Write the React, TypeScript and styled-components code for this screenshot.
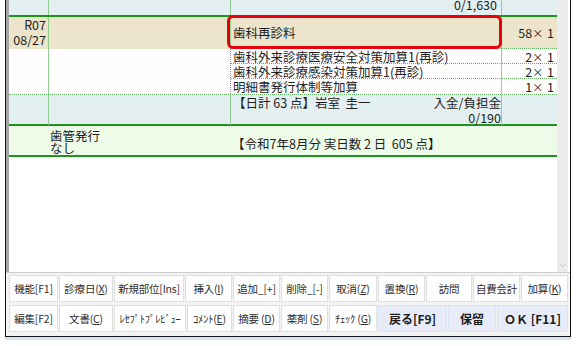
import React from 'react';
import styled, { createGlobalStyle, css } from 'styled-components';

const Global = createGlobalStyle`
  *, *::before, *::after { box-sizing: border-box; }
  html, body { margin: 0; padding: 0; background: #ffffff; }
  body {
    font-family: "Noto Sans CJK JP", "Noto Sans", sans-serif;
    color: #1e1e1e;
  }
  #root { width: 581px; height: 346px; overflow: hidden; }
`;

const COLS = '40px 182px 271px 55px';
const GREEN = '#1d961d';
const VLINE = '#8fcf8f';
const DOT = '#5fb65f';

const Frame = styled.div`
  margin-left: 5px;
  width: 566px;
  height: 337px;
  border: 1px solid #151515;
  border-top: none;
  box-shadow: 0 3px 0 #d7e4f1;
  background: #ffffff;
  display: flex;
  flex-direction: column;
`;

const Upper = styled.div`
  height: 272px;
  display: grid;
  grid-template-columns: 3px 548px 11px 2px;
`;

const LeftBar = styled.div`
  background: #a6a6a6;
`;

const Scroll = styled.div`
  background: #ececec;
  display: flex;
  flex-direction: column;
  justify-content: flex-end;
  align-items: center;
  padding-bottom: 4px;
`;

const Table = styled.div`
  display: flex;
  flex-direction: column;
  overflow: hidden;
  font-size: 12.5px;
  line-height: 15px;
  white-space: nowrap;
`;

const Row = styled.div<{ $bg: string; $h: number; $bottom?: string }>`
  display: grid;
  grid-template-columns: ${COLS};
  height: ${(p) => p.$h}px;
  background: ${(p) => p.$bg};
  border-bottom: ${(p) => p.$bottom ?? 'none'};
`;

const DetailBlock = styled.div`
  display: grid;
  grid-template-columns: ${COLS};
  grid-template-rows: 15px 15px 15px;
  height: 46px;
  background: #fffdfd;
  border-bottom: 1px dotted ${DOT};
`;

const Cell = styled.div<{
  $right?: 'solid' | 'dotted';
  $dotBottom?: boolean;
  $align?: 'left' | 'right';
  $center?: boolean;
  $span?: boolean;
}>`
  ${(p) => p.$right && css`border-right: 1px ${p.$right} ${p.$right === 'solid' ? VLINE : DOT};`}
  ${(p) => p.$dotBottom && css`border-bottom: 1px dotted ${DOT};`}
  ${(p) => p.$span && css`grid-row: 1 / 4;`}
  text-align: ${(p) => p.$align ?? 'left'};
  white-space: pre;
  padding: 0 ${(p) => (p.$align === 'right' ? '3px' : '0')} 0
    ${(p) => (p.$align === 'right' ? '0' : '2px')};
  position: relative;
  ${(p) =>
    p.$center &&
    css`
      display: flex;
      align-items: center;
      justify-content: ${p.$align === 'right' ? 'flex-end' : 'flex-start'};
    `}
`;

const DateCell = styled(Cell)`
  padding-right: 2px;
`;

const CutText = styled.div`
  margin-top: -3px;
  padding-right: 1px;
`;

const Times = styled.span`
  font-size: 11px;
  margin: 0 1px 0 0;
`;

const QtyText = styled.span`
  white-space: pre;
`;

const Highlight = styled.div`
  position: absolute;
  left: -4px;
  top: -2px;
  right: -1px;
  bottom: -1px;
  border: 3px solid #e8000c;
  border-radius: 6px;
  pointer-events: none;
`;

const SplitLine = styled.div`
  display: flex;
  justify-content: space-between;
  white-space: pre;
`;

const RightLine = styled.div`
  text-align: right;
`;

const NoteCell = styled.div<{ $padTop: number; $lh: number }>`
  padding: ${(p) => p.$padTop}px 0 0 1px;
  line-height: ${(p) => p.$lh}px;
  white-space: pre;
`;

const Panel = styled.div`
  flex: 1;
  border-top: 1px solid #cdcdcd;
  background: #f3f3f3;
  padding: 2px 2px 4px 3px;
  display: flex;
  flex-direction: column;
  gap: 3px;
`;

const BtnRow = styled.div`
  display: flex;
  gap: 1px;
`;

const Btn = styled.div<{ $w: number; $primary?: boolean }>`
  width: ${(p) => p.$w}px;
  height: 27px;
  border: 1px solid #dfdfdf;
  background: #ffffff;
  display: flex;
  align-items: center;
  justify-content: center;
  font-size: 10.5px;
  color: #2e2e2e;
  white-space: pre;
  letter-spacing: -0.2px;
  ${(p) =>
    p.$primary &&
    css`
      background: #e7ecf8;
      border-color: #dde3ef;
      font-size: 12px;
      font-weight: bold;
      color: #1c1c1c;
      letter-spacing: 0;
    `}
  u { text-underline-offset: 1px; }
`;

type B = { w: number; label: React.ReactNode; primary?: boolean };

const row1: B[] = [
  { w: 49, label: '機能[F1]' },
  { w: 54, label: <>診療日(<u>X</u>)</> },
  { w: 70, label: '新規部位[Ins]' },
  { w: 47, label: <>挿入(<u>I</u>)</> },
  { w: 47, label: '追加_[+]' },
  { w: 47, label: '削除_[-]' },
  { w: 48, label: <>取消(<u>Z</u>)</> },
  { w: 47, label: <>置換(<u>R</u>)</> },
  { w: 46, label: '訪問' },
  { w: 47, label: '自費会計' },
  { w: 47, label: <>加算(<u>K</u>)</> },
];

const row2: B[] = [
  { w: 49, label: '編集[F2]' },
  { w: 54, label: <>文書(<u>C</u>)</> },
  { w: 72, label: 'ﾚｾﾌﾟﾄﾌﾟﾚﾋﾞｭｰ' },
  { w: 45, label: <>ｺﾒﾝﾄ(<u>E</u>)</> },
  { w: 47, label: <>摘要 (<u>D</u>)</> },
  { w: 47, label: <>薬剤 (<u>S</u>)</> },
  { w: 48, label: <>ﾁｪｯｸ (<u>G</u>)</> },
  { w: 69, label: '戻る[F9]', primary: true },
  { w: 48, label: '保留', primary: true },
  { w: 71, label: 'ＯＫ [F11]', primary: true },
];

const details = [
  { name: '歯科外来診療医療安全対策加算1(再診)', n: '2' },
  { name: '歯科外来診療感染対策加算1(再診)', n: '2' },
  { name: '明細書発行体制等加算', n: '1' },
];

const Qty = ({ n }: { n: string }) => (
  <QtyText>
    {n}
    <Times>×</Times>
    {' 1'}
  </QtyText>
);

const Chevron = () => (
  <svg width="7" height="5" viewBox="0 0 7 5">
    <path d="M0.5 0.8 L3.5 3.8 L6.5 0.8" fill="none" stroke="#b9b9b9" strokeWidth="1" />
  </svg>
);

export default function App() {
  return (
    <>
      <Global />
      <Frame>
        <Upper>
          <LeftBar />
          <Table>
            <Row $bg="#e3eff0" $h={17} $bottom={`2px solid ${GREEN}`}>
              <Cell $right="solid" />
              <Cell $right="solid" />
              <Cell $right="solid" $align="right">
                <CutText>0/1,630</CutText>
              </Cell>
              <Cell />
            </Row>
            <Row $bg="#ece5cc" $h={32}>
              <DateCell $right="solid" $align="right">
                {'R07\n08/27'}
              </DateCell>
              <Cell $right="solid" />
              <Cell $right="solid" $dotBottom $center>
                歯科再診料
                <Highlight />
              </Cell>
              <Cell $dotBottom $center $align="right">
                <Qty n="58" />
              </Cell>
            </Row>
            <DetailBlock>
              <Cell $right="solid" $span />
              <Cell $right="dotted" $span />
              {details.map((d, i) => (
                <React.Fragment key={d.name}>
                  <Cell $right="solid" $dotBottom={i < 2}>
                    {d.name}
                  </Cell>
                  <Cell $dotBottom={i < 2} $align="right">
                    <Qty n={d.n} />
                  </Cell>
                </React.Fragment>
              ))}
            </DetailBlock>
            <Row $bg="#e3eff0" $h={31} $bottom={`2px solid ${GREEN}`}>
              <Cell $right="solid" />
              <Cell $right="solid" />
              <Cell $right="solid">
                <SplitLine>
                  <span>{'【日計 63 点】岩室  圭一'}</span>
                  <span>入金/負担金</span>
                </SplitLine>
                <RightLine>0/190</RightLine>
              </Cell>
              <Cell />
            </Row>
            <Row $bg="#effbe9" $h={31} $bottom={`2px solid ${GREEN}`}>
              <div />
              <NoteCell $padTop={4} $lh={12}>
                {'歯管発行\nなし'}
              </NoteCell>
              <NoteCell $padTop={10} $lh={15}>
                {'【令和7年8月分 実日数 2 日  605 点】'}
              </NoteCell>
              <div />
            </Row>
          </Table>
          <Scroll>
            <Chevron />
          </Scroll>
          <div />
        </Upper>
        <Panel>
          <BtnRow>
            {row1.map((b, i) => (
              <Btn key={i} $w={b.w} $primary={b.primary}>
                {b.label}
              </Btn>
            ))}
          </BtnRow>
          <BtnRow>
            {row2.map((b, i) => (
              <Btn key={i} $w={b.w} $primary={b.primary}>
                {b.label}
              </Btn>
            ))}
          </BtnRow>
        </Panel>
      </Frame>
    </>
  );
}
